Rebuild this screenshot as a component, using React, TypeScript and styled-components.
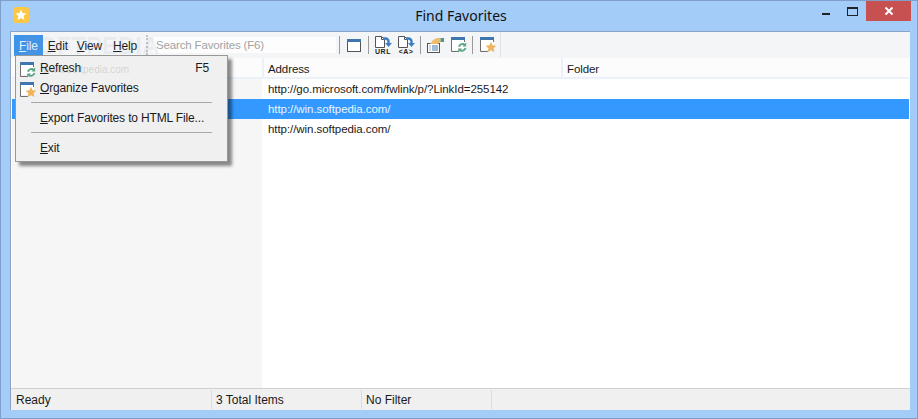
import React from "react";
import styled, { createGlobalStyle } from "styled-components";

const GlobalStyle = createGlobalStyle`
    html, body {
        margin: 0;
        padding: 0;
        overflow: hidden;
    }
    body {
        font-family: "Liberation Sans", Arial, sans-serif;
        font-size: 12px;
        color: #1a1a1a;
    }
`;

const Frame = styled.div`
    position: relative;
    box-sizing: border-box;
    width: 918px;
    height: 419px;
    display: flex;
    flex-direction: column;
    background: #a3ccf8;
    border: 1px solid #7f9fca;
`;

const TitleBar = styled.div`
    position: relative;
    flex: 0 0 29px;
    display: flex;
    align-items: center;
    justify-content: center;
    height: 29px;
`;

const AppIcon = styled.div`
    position: absolute;
    left: 12px;
    top: 6px;
    width: 16px;
    height: 16px;
    border-radius: 3px;
    background: #fcc743;
    display: flex;
    align-items: center;
    justify-content: center;
`;

const Title = styled.div`
    font-family: "Noto Sans", sans-serif;
    font-size: 14px;
    color: #111;
    margin-left: 4px;
    margin-top: -1px;
`;

const WindowButtons = styled.div`
    position: absolute;
    right: 6px;
    top: 0;
    display: flex;
    align-items: flex-start;
`;

const WindowButton = styled.div<{ $close?: boolean }>`
    width: ${(p) => (p.$close ? "45px" : "27px")};
    height: 20px;
    display: flex;
    align-items: center;
    justify-content: center;
    background: ${(p) => (p.$close ? "#c75050" : "transparent")};
`;

const Client = styled.div`
    flex: 1;
    display: flex;
    flex-direction: column;
    margin: 1px 7px 8px 9px;
    background: #fff;
    border-top: 1px solid #8ba4c6;
    border-left: 1px solid #8ba4c6;
    padding: 0 1px 0 1px;
    min-height: 0;
`;

const Toolbar = styled.div`
    flex: 0 0 26px;
    display: flex;
    align-items: center;
    background: #f4f5f7;
    margin: 0 -1px;
    padding-left: 3px;
`;

const MenuBar = styled.div`
    display: flex;
    align-items: center;
    width: 132px;
    letter-spacing: -0.15px;
`;

const MenuTitle = styled.div<{ $active?: boolean; $left?: number }>`
    height: 21px;
    line-height: 22px;
    margin-left: ${(p) => p.$left ?? 0}px;
    padding: 0 ${(p) => (p.$active ? 5 : 4)}px 0 ${(p) => (p.$active ? 5 : 4)}px;
    color: ${(p) => (p.$active ? "#e8f2fd" : "#1a1a1a")};
    background: ${(p) => (p.$active ? "#3f93e8" : "transparent")};
`;

const Grip = styled.div`
    width: 0;
    height: 20px;
    margin-right: 5px;
    border-left: 2px dotted #c4c4c4;
`;

const Search = styled.div`
    box-sizing: border-box;
    width: 183px;
    height: 16px;
    line-height: 17px;
    padding-left: 3px;
    background: #fdfdfd;
    color: #a3a3a3;
    font-size: 11.5px;
    letter-spacing: -0.15px;
    white-space: nowrap;
`;

const Divider = styled.div<{ $left: number; $right: number }>`
    width: 1px;
    height: 18px;
    background: #9a9a9a;
    margin: 0 ${(p) => p.$right}px 0 ${(p) => p.$left}px;
`;

const ToolButtons = styled.div`
    display: flex;
    align-items: center;
    height: 26px;
    padding-right: 4px;
    border-right: 1px solid #e2e2e2;
`;

const ToolIcon = styled.svg<{ $gap?: number }>`
    display: block;
    flex: none;
    margin-right: ${(p) => p.$gap ?? 0}px;
`;

const ListHeader = styled.div`
    flex: 0 0 21px;
    display: grid;
    grid-template-columns: 250px 299px 1fr;
    background: #fcfcfc;
    border-bottom: 2px solid #ebf1fa;
    box-sizing: border-box;
    height: 21px;
    font-size: 11.5px;
    letter-spacing: -0.1px;
`;

const HeaderCell = styled.div`
    line-height: 22px;
    padding-left: 4px;
    border-left: 2px solid #ebf1fa;
    &:first-child {
        border-left: 0;
    }
`;

const ListBody = styled.div`
    flex: 1;
    min-height: 0;
    font-size: 11.5px;
    letter-spacing: -0.06px;
    background: linear-gradient(to right, #f6f6f6 250px, #fff 250px);
`;

const Row = styled.div<{ $selected?: boolean }>`
    display: grid;
    grid-template-columns: 251px 1fr;
    height: 20px;
    line-height: 20px;
    color: ${(p) => (p.$selected ? "#eaf4ff" : "#1a1a1a")};
    background: ${(p) => (p.$selected ? "#3399ff" : "transparent")};
`;

const Cell = styled.div`
    padding-left: 5px;
    white-space: nowrap;
`;

const StatusBar = styled.div`
    flex: 0 0 22px;
    height: 22px;
    box-sizing: border-box;
    display: flex;
    align-items: stretch;
    margin: 0 -1px;
    padding-left: 1px;
    background: #f0f0f0;
    border-top: 1px solid #d0d0d0;
`;

const StatusPane = styled.div<{ $width: number }>`
    box-sizing: border-box;
    width: ${(p) => p.$width}px;
    height: 19px;
    margin: 1px 0;
    padding-left: 4px;
    line-height: 21px;
    border-right: 1px solid #dcdcdc;
`;

const DropMenu = styled.div`
    position: absolute;
    left: 14px;
    top: 54px;
    box-sizing: border-box;
    width: 213px;
    height: 107px;
    padding: 2px 1px;
    background: #f0f0f0;
    border: 1px solid #979797;
    box-shadow: 4px 4px 3px rgba(0, 0, 0, 0.45);
    letter-spacing: -0.15px;
    z-index: 2;
`;

const MenuItem = styled.div`
    position: relative;
    display: flex;
    justify-content: space-between;
    height: 20px;
    line-height: 21px;
    padding: 0 17px 0 23px;
    white-space: nowrap;
`;

const MenuGlyph = styled.div`
    position: absolute;
    left: 3px;
    top: 4px;
`;

const MenuSeparator = styled.div`
    height: 1px;
    margin: 4px 14px 5px 14px;
    background: #a8a8a8;
`;

const Watermark = styled.div`
    position: absolute;
    left: 21px;
    top: 31px;
    font-size: 24px;
    font-weight: 700;
    color: rgba(150, 160, 175, 0.12);
    z-index: 3;
    pointer-events: none;
`;

const WatermarkLink = styled.div`
    position: absolute;
    left: 42px;
    top: 63px;
    font-size: 10px;
    color: rgba(120, 120, 120, 0.25);
    z-index: 3;
    pointer-events: none;
`;

function WindowGlyph() {
    return (
        <>
            <path d="M0 0h14v13h-14z" fill="#fff" />
            <path d="M.5 1v13.5h7.5M13.5 1v4" fill="none" stroke="#6f6f6f" />
            <rect x="0" y="0" width="14" height="3" fill="#3f76ae" />
        </>
    );
}

function RefreshBadge() {
    return (
        <g fill="none" stroke="#5fa585" strokeWidth="2">
            <path d="M8 9.8a3.6 3.6 0 0 1 6-1.8" />
            <path d="M14.4 11a3.6 3.6 0 0 1-6 1.8" />
            <path d="M15.2 5.6v3.8h-3.8z" fill="#5fa585" stroke="none" />
            <path d="M7.2 15.4v-3.8h3.8z" fill="#5fa585" stroke="none" />
        </g>
    );
}

function StarBadge() {
    return <path d="M11 4.8l1.6 3.5 3.8.4-2.8 2.6.8 3.8-3.4-1.9-3.4 1.9.8-3.8-2.8-2.6 3.8-.4z" fill="#f0b45c" />;
}

function PageArrow({ label, gap }: { label: string; gap: number }) {
    return (
        <ToolIcon $gap={gap} width="17" height="19" viewBox="0 0 17 19">
            <path d="M.5.5h6l3 3v8h-9z" fill="#fff" stroke="#555" />
            <path d="M6.5.5v3h3" fill="none" stroke="#555" />
            <path d="M8 2.5h2.5a3 3 0 0 1 3 3v2" fill="none" stroke="#3c7ebf" strokeWidth="2.4" />
            <path d="M10 7h7l-3.5 4z" fill="#3c7ebf" />
            <text x="8" y="18" textAnchor="middle" fontSize="7" fontWeight="700" letterSpacing="0.5" fontFamily="Liberation Sans, sans-serif" fill="#222">
                {label}
            </text>
        </ToolIcon>
    );
}

export default function App() {
    return (
        <Frame>
            <GlobalStyle />
            <TitleBar>
                <AppIcon>
                    <svg width="12" height="12" viewBox="0 0 12 12">
                        <path d="M6 .6l1.6 3.5 3.8.4-2.8 2.6.8 3.8L6 9l-3.4 1.9.8-3.8L.6 4.5l3.8-.4z" fill="#fff" />
                    </svg>
                </AppIcon>
                <Title>Find Favorites</Title>
                <WindowButtons>
                    <WindowButton>
                        <svg width="10" height="10" viewBox="0 0 10 10">
                            <rect x="1" y="7" width="8" height="2" fill="#222" />
                        </svg>
                    </WindowButton>
                    <WindowButton>
                        <svg width="11" height="9" viewBox="0 0 11 9">
                            <rect x="0.5" y="0.5" width="10" height="8" fill="none" stroke="#222" />
                            <rect x="0" y="0" width="11" height="2" fill="#222" />
                        </svg>
                    </WindowButton>
                    <WindowButton $close>
                        <svg width="10" height="10" viewBox="0 0 10 10">
                            <path d="M1.5 1.5l7 7M8.5 1.5l-7 7" stroke="#fff" strokeWidth="2" />
                        </svg>
                    </WindowButton>
                </WindowButtons>
            </TitleBar>

            <Client>
                <Toolbar>
                    <MenuBar>
                        <MenuTitle $active>
                            <u>F</u>ile
                        </MenuTitle>
                        <MenuTitle $left={1}>
                            <u>E</u>dit
                        </MenuTitle>
                        <MenuTitle $left={1}>
                            <u>V</u>iew
                        </MenuTitle>
                        <MenuTitle $left={3}>
                            <u>H</u>elp
                        </MenuTitle>
                    </MenuBar>
                    <Grip />
                    <Search>Search Favorites (F6)</Search>
                    <Divider $left={3} $right={7} />
                    <ToolButtons>
                        <ToolIcon width="14" height="13" viewBox="0 0 14 13">
                            <rect x="0.5" y="0.5" width="13" height="12" fill="#fff" stroke="#555" />
                            <rect x="0" y="0" width="14" height="3" fill="#3f76ae" />
                        </ToolIcon>
                        <Divider $left={7} $right={6} />
                        <PageArrow label="URL" gap={6} />
                        <PageArrow label="<A>" gap={0} />
                        <Divider $left={5} $right={6} />
                        <ToolIcon $gap={7} width="17" height="17" viewBox="0 0 17 17">
                            <rect x="0.5" y="6.5" width="12" height="9" fill="#fff" stroke="#555" />
                            <path d="M2.5 9h1M2.5 11h1M2.5 13h1M5 9h6M5 11h6M5 13h6" stroke="#3f76ae" />
                            <path d="M3 7l3-4 4-2h3.500v4l-3 2h-3z" fill="#f0bd6a" />
                            <rect x="13.500" y="1" width="3.500" height="4" fill="#4f9a8d" />
                        </ToolIcon>
                        <ToolIcon width="16" height="16" viewBox="0 0 16 16">
                            <WindowGlyph />
                            <RefreshBadge />
                        </ToolIcon>
                        <Divider $left={5} $right={7} />
                        <ToolIcon width="16" height="16" viewBox="0 0 16 16">
                            <WindowGlyph />
                            <StarBadge />
                        </ToolIcon>
                    </ToolButtons>
                </Toolbar>

                <ListHeader>
                    <HeaderCell />
                    <HeaderCell>Address</HeaderCell>
                    <HeaderCell>Folder</HeaderCell>
                </ListHeader>

                <ListBody>
                    <Row>
                        <Cell />
                        <Cell>http://go.microsoft.com/fwlink/p/?LinkId=255142</Cell>
                    </Row>
                    <Row $selected>
                        <Cell />
                        <Cell>http://win.softpedia.com/</Cell>
                    </Row>
                    <Row>
                        <Cell />
                        <Cell>http://win.softpedia.com/</Cell>
                    </Row>
                </ListBody>

                <StatusBar>
                    <StatusPane $width={200}>Ready</StatusPane>
                    <StatusPane $width={150}>3 Total Items</StatusPane>
                    <StatusPane $width={130}>No Filter</StatusPane>
                </StatusBar>
            </Client>

            <Watermark>SOFTPEDIA</Watermark>
            <WatermarkLink>www.softpedia.com</WatermarkLink>

            <DropMenu>
                <MenuItem>
                    <MenuGlyph>
                        <svg width="16" height="16" viewBox="0 0 16 16">
                            <WindowGlyph />
                            <RefreshBadge />
                        </svg>
                    </MenuGlyph>
                    <span>
                        <u>R</u>efresh
                    </span>
                    <span>F5</span>
                </MenuItem>
                <MenuItem>
                    <MenuGlyph>
                        <svg width="16" height="16" viewBox="0 0 16 16">
                            <WindowGlyph />
                            <StarBadge />
                        </svg>
                    </MenuGlyph>
                    <span>
                        <u>O</u>rganize Favorites
                    </span>
                </MenuItem>
                <MenuSeparator />
                <MenuItem>
                    <span>
                        <u>E</u>xport Favorites to HTML File...
                    </span>
                </MenuItem>
                <MenuSeparator />
                <MenuItem>
                    <span>
                        <u>E</u>xit
                    </span>
                </MenuItem>
            </DropMenu>
        </Frame>
    );
}
